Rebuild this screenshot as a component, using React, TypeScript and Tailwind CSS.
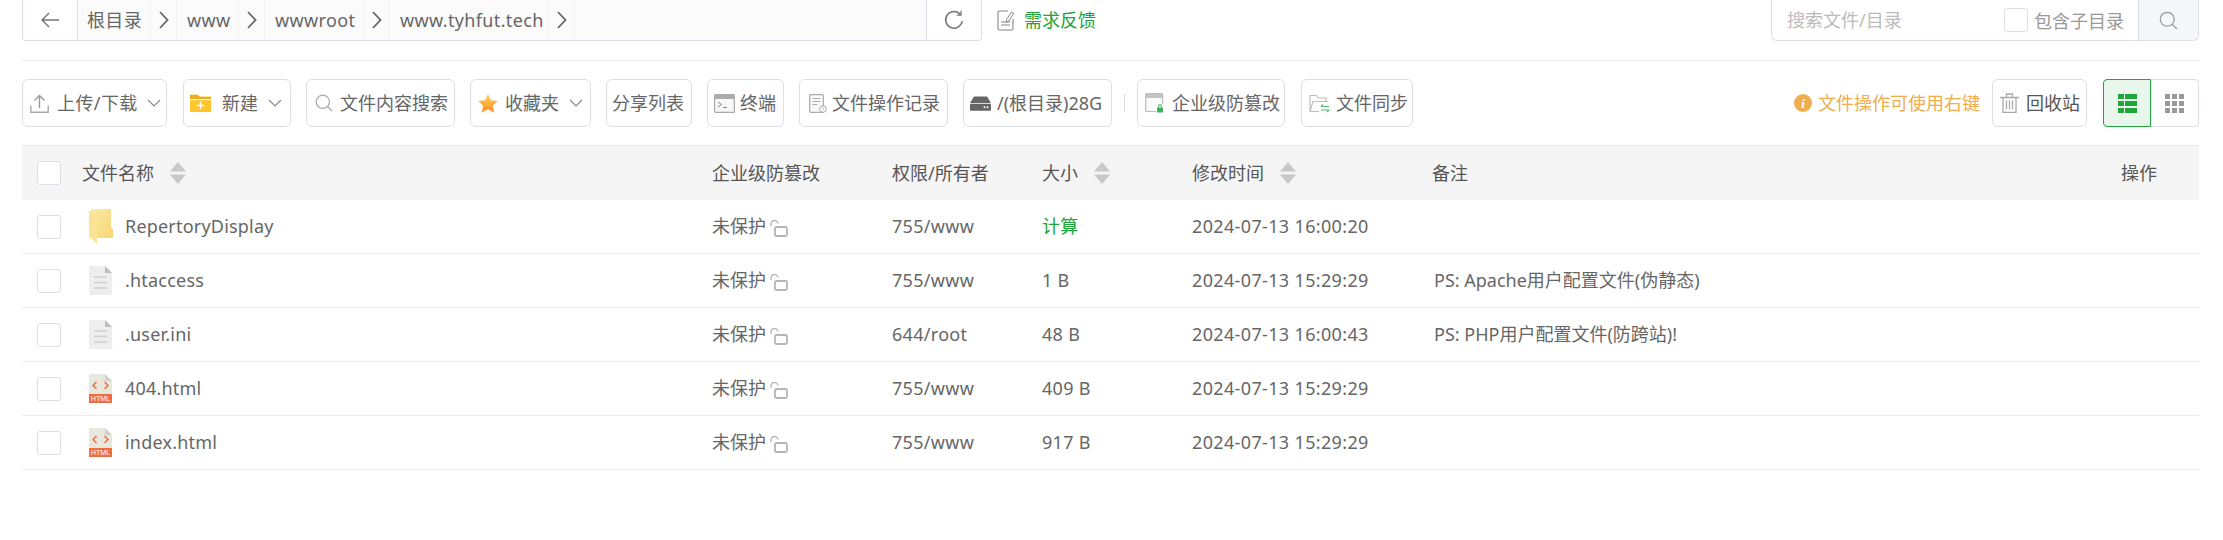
import React from "react";

const Chevron = ({ className = "" }: { className?: string }) => (
  <svg width="14" height="8" viewBox="0 0 14 8" fill="none" className={className}>
    <path d="M1 1l6 6 6-6" stroke="#8a8a8a" strokeWidth="1.2" />
  </svg>
);

const PathArrow = () => (
  <svg width="10" height="18" viewBox="0 0 10 18" fill="none">
    <path d="M1 1l7.5 8L1 17" stroke="#666" strokeWidth="1.8" />
  </svg>
);

const Upload = () => (
  <svg width="19" height="19" viewBox="0 0 19 19" fill="none" stroke="#999" strokeWidth="1.4">
    <path d="M9.5 14V1.5M4.5 6.5l5-5 5 5" />
    <path d="M.8 11.5v6.7h17.4v-6.7" stroke="#aaa" />
  </svg>
);

const NewFolder = () => (
  <svg width="21" height="18" viewBox="0 0 21 18">
    <path d="M0 1.5A1 1 0 0 1 1 .5h6l2 2h12V18H0z" fill="#fec52d" />
    <path d="M0 1h8l2 2h11v2H0z" fill="#f0a81e" />
    <rect x="0" y="5" width="21" height="1.2" fill="#fff" />
    <path d="M10.5 8v7M7 11.5h7" stroke="#fff" strokeWidth="1.3" />
  </svg>
);

const Search = ({ color = "#aaa", size = 18 }: { color?: string; size?: number }) => (
  <svg width={size} height={size} viewBox="0 0 18 18" fill="none" stroke={color} strokeWidth="1.2">
    <circle cx="7.8" cy="7.8" r="6.6" />
    <path d="M12.5 12.5l4.5 4.5" />
  </svg>
);

const Star = () => (
  <svg width="20" height="19" viewBox="0 0 20 19">
    <defs>
      <linearGradient id="starGrad" x1="0" y1="0" x2="0" y2="1">
        <stop offset="0" stopColor="#fdd667" />
        <stop offset="1" stopColor="#f98c1e" />
      </linearGradient>
    </defs>
    <path d="M10 0l3 6.2 6.8.9-5 4.7 1.300 6.800L10 15.300l-6.100 3.300 1.300-6.800-5-4.700 6.800-.9z" fill="url(#starGrad)" />
  </svg>
);

const Terminal = () => (
  <svg width="21" height="19" viewBox="0 0 21 19" fill="none">
    <rect x=".6" y=".6" width="19.800" height="17.800" rx="1" stroke="#aaa" strokeWidth="1.200" fill="#f7f7f7" />
    <rect x="1" y="1" width="19" height="4" fill="#aaa" />
    <path d="M4 8l3.500 2.500L4 13" stroke="#888" strokeWidth="1" />
    <path d="M9 13.500h4" stroke="#888" strokeWidth="1" />
  </svg>
);

const LogDoc = () => (
  <svg width="18" height="19" viewBox="0 0 18 19" fill="none">
    <rect x=".7" y=".7" width="13.600" height="17.600" rx="1" stroke="#aaa" strokeWidth="1.200" fill="#fafafa" />
    <path d="M3.500 4.500h8M3.500 7.500h8M3.500 10.500h5" stroke="#aaa" strokeWidth="1.100" />
    <circle cx="14" cy="15" r="3.300" fill="#fff" stroke="#aaa" />
    <path d="M14 13.300v1.800l1 .7" stroke="#aaa" strokeWidth=".8" />
  </svg>
);

const Disk = () => (
  <svg width="21" height="15" viewBox="0 0 21 15">
    <path d="M4 .5h13L21 7H0z" fill="#666" />
    <rect x="0" y="7.800" width="21" height="7" rx="1" fill="#666" />
    <circle cx="17.500" cy="11.300" r="1" fill="#fff" />
    <circle cx="14.500" cy="11.300" r="1" fill="#fff" />
  </svg>
);

const Guard = () => (
  <svg width="20" height="20" viewBox="0 0 20 20" fill="none">
    <rect x=".7" y=".7" width="17" height="17.800" rx="1" stroke="#bbb" strokeWidth="1.200" fill="#fafafa" />
    <rect x="1" y="1" width="16.500" height="4" fill="#c4c4c4" />
    <rect x="11" y="11" width="8" height="9" fill="#fff" />
    <rect x="12" y="14.500" width="6" height="5" rx=".8" fill="#3fb35a" />
    <path d="M13.500 14.500v-1.500a1.500 1.500 0 0 1 3 0v1.500" stroke="#3fb35a" strokeWidth="1" />
  </svg>
);

const SyncFolder = () => (
  <svg width="21" height="19" viewBox="0 0 21 19" fill="none">
    <path d="M1 17.500V1.500h6l2 2.500h8v3" stroke="#bbb" strokeWidth="1.100" />
    <path d="M1 17.500L4 7.500h15.500" stroke="#bbb" strokeWidth="1.100" />
    <path d="M1 17.500h9" stroke="#bbb" strokeWidth="1.100" />
    <path d="M12 12.500h8M14 10.500l-2 2" stroke="#5cb870" strokeWidth="1.100" />
    <path d="M20 16h-8M18 18l2-2" stroke="#5cb870" strokeWidth="1.100" />
  </svg>
);

const Trash = () => (
  <svg width="19" height="20" viewBox="0 0 19 20" fill="none" stroke="#aaa" strokeWidth="1.300">
    <path d="M0 4.500h19M6.500 4V1h6v3" />
    <path d="M3 4.500v15h13v-15" />
    <path d="M6.500 7.500v9M9.500 7.500v9M12.500 7.500v9" />
  </svg>
);

const Refresh = () => (
  <svg width="20" height="20" viewBox="0 0 20 20" fill="none" stroke="#777" strokeWidth="1.500">
    <path d="M16.500 4.700A8.300 8.300 0 1 0 18.200 11" />
    <path d="M17 .8v4.400h-4.300" strokeWidth="1.300" />
  </svg>
);

const FeedbackIcon = () => (
  <svg width="18" height="21" viewBox="0 0 18 21" fill="none">
    <path d="M11 1H2.500A1.500 1.500 0 0 0 1 2.500v16A1.500 1.500 0 0 0 2.500 20h12a1.500 1.500 0 0 0 1.500-1.500V9" stroke="#888" strokeWidth="1.100" />
    <path d="M9.500 9.500l5-7.500 2.200 1.500-5 7.500-2.400.8z" stroke="#888" strokeWidth="1" />
    <path d="M4 12h9M4 15h9" stroke="#888" strokeWidth="1.100" />
  </svg>
);

const SortIcon = () => (
  <svg width="16" height="22" viewBox="0 0 16 22">
    <path d="M8 0l8 9.500H0z" fill="#c8c8c8" />
    <path d="M8 22L0 12.500h16z" fill="#c8c8c8" />
  </svg>
);

const OpenLock = () => (
  <svg width="18" height="17" viewBox="0 0 18 17" fill="none" className="ml-[4px] mt-[3px]">
    <rect x="5" y="7" width="12" height="9" rx="1.500" stroke="#b5b5b5" strokeWidth="1.800" />
    <path d="M1 6V4.500a3.500 3.500 0 0 1 7-1" stroke="#b5b5b5" strokeWidth="1.300" />
  </svg>
);

const FolderIcon = () => (
  <svg width="24" height="35" viewBox="0 0 24 35">
    <defs>
      <linearGradient id="folderGrad" x1="0" y1="0" x2="1" y2="1">
        <stop offset="0" stopColor="#fdeaa5" />
        <stop offset="1" stopColor="#f6d676" />
      </linearGradient>
    </defs>
    <path d="M2 0h20v18l2 2.500V29H8V9L2 3z" fill="url(#folderGrad)" />
    <path d="M0 1l8 7v27l-8-7z" fill="#fbe394" />
  </svg>
);

const DocIcon = () => (
  <svg width="23" height="29" viewBox="0 0 23 29">
    <path d="M0 0h16l7 7v22H0z" fill="#eeeeee" />
    <path d="M16 0l7 7h-7z" fill="#bdbdbd" />
    <path d="M5 11h13M5 16.500h13M5 22h13" stroke="#cfcfcf" strokeWidth="1.300" />
  </svg>
);

const HtmlIcon = () => (
  <svg width="23" height="29" viewBox="0 0 23 29">
    <path d="M0 0h16l7 7v14H0z" fill="#e9e8df" />
    <path d="M16 0l7 7h-7z" fill="#d2d1c8" />
    <path d="M7.500 8l-3.500 3.500L7.500 15M15.500 8l3.500 3.500L15.500 15" fill="none" stroke="#ea7045" strokeWidth="1.500" />
    <rect x="0" y="20" width="23" height="9" fill="#ee6e3d" />
    <text x="11.500" y="27.300" textAnchor="middle" fontSize="7.200" fill="#fff" fontFamily="'Liberation Sans', sans-serif">HTML</text>
  </svg>
);

const Btn = ({ w, pl, gap = "gap-[8px]", children }: { w: string; pl: string; gap?: string; children: React.ReactNode }) => (
  <div className={`${w} ${pl} ${gap} h-[48px] shrink-0 flex items-center border border-[#dcdfe6] rounded-[6px] text-[18px] text-[#666]`}>
    {children}
  </div>
);

const pathItems: [string, string][] = [
  ["根目录", "w-[73px] pl-[9px]"],
  ["www", "w-[62px] pl-[10px]"],
  ["wwwroot", "w-[99px] pl-[10px]"],
  ["www.tyhfut.tech", "w-[159px] pl-[10px]"],
];

const rows = [
  { name: "RepertoryDisplay", icon: <FolderIcon />, perm: "755/www", size: "计算", time: "2024-07-13 16:00:20", note: "" },
  { name: ".htaccess", icon: <DocIcon />, perm: "755/www", size: "1 B", time: "2024-07-13 15:29:29", note: "PS: Apache用户配置文件(伪静态)" },
  { name: ".user.ini", icon: <DocIcon />, perm: "644/root", size: "48 B", time: "2024-07-13 16:00:43", note: "PS: PHP用户配置文件(防跨站)!" },
  { name: "404.html", icon: <HtmlIcon />, perm: "755/www", size: "409 B", time: "2024-07-13 15:29:29", note: "" },
  { name: "index.html", icon: <HtmlIcon />, perm: "755/www", size: "917 B", time: "2024-07-13 15:29:29", note: "" },
];

const gridCols = "grid grid-cols-[60px_630px_180px_150px_150px_240px_689px_1fr] items-center";

const Check = () => <div className="ml-[15px] w-[24px] h-[24px] bg-white border border-[#dcdfe6] rounded-[3px]" />;

export default function App() {
  return (
    <div className="w-[2223px] h-[540px] bg-white pl-[22px] pr-[24px] overflow-hidden font-['Noto_Sans','Noto_Sans_CJK_SC',sans-serif] text-[18px] text-[#666]">
      {/* top bar */}
      <div className="flex h-[41px]">
        <div className="w-[56px] flex items-center justify-center border-x border-b border-[#dcdfe6] rounded-bl-[4px]">
          <svg width="18" height="16" viewBox="0 0 18 16" fill="none" stroke="#777" strokeWidth="1.500">
            <path d="M18 8H1M8 1L1 8l7 7" />
          </svg>
        </div>
        <div className="w-[848px] flex items-center bg-[#fbfbfb] border-b border-[#dcdfe6]">
          {pathItems.map(([t, c]) => (
            <React.Fragment key={t}>
              <div className={`${c} h-full flex items-center border-r border-[#f4f4f4] text-[#666] tracking-[0.35px]`}>{t}</div>
              <div className="w-[26px] h-full flex items-center pl-[8px] border-r border-[#f4f4f4]">
                <PathArrow />
              </div>
            </React.Fragment>
          ))}
        </div>
        <div className="w-[56px] flex items-center justify-center border-x border-b border-[#dcdfe6] rounded-br-[4px]">
          <Refresh />
        </div>
        <div className="ml-[15px] flex items-center gap-[9px]">
          <FeedbackIcon />
          <span className="text-[#20a53a]">需求反馈</span>
        </div>
        <div className="ml-auto w-[428px] flex items-center border-x border-b border-[#dcdfe6] rounded-b-[6px]">
          <span className="pl-[15px] w-[232px] text-[#bbb]">搜索文件/目录</span>
          <div className="w-[24px] h-[24px] border border-[#dcdfe6] rounded-[3px]" />
          <span className="ml-[6px] w-[104px] text-[#999] mt-[2px]">包含子目录</span>
          <div className="flex-1 h-full flex items-center justify-center bg-[#f4f6fa] border-l border-[#dcdfe6] rounded-br-[6px]">
            <Search color="#999" size={19} />
          </div>
        </div>
      </div>

      <div className="mt-[19px] border-t border-[#ececec]" />

      {/* toolbar */}
      <div className="mt-[18px] flex items-center h-[48px] gap-[15px]">
        <Btn w="w-[145px]" pl="pl-[7px]" gap="gap-[8px]">
          <Upload />
          <span className="tracking-[0.4px]">上传/下载</span>
          <Chevron className="ml-[1px]" />
        </Btn>
        <Btn w="w-[108px] ml-[1px]" pl="pl-[6px]" gap="gap-[11px]">
          <NewFolder />
          <span>新建</span>
          <Chevron className="-ml-[1px]" />
        </Btn>
        <Btn w="w-[149px]" pl="pl-[8px]" gap="gap-[7px]">
          <Search />
          <span>文件内容搜索</span>
        </Btn>
        <Btn w="w-[121px]" pl="pl-[7px]" gap="gap-[7px]">
          <Star />
          <span>收藏夹</span>
          <Chevron className="ml-[3px]" />
        </Btn>
        <Btn w="w-[86px]" pl="pl-[5px]">
          <span>分享列表</span>
        </Btn>
        <Btn w="w-[77px]" pl="pl-[6px]" gap="gap-[5px]">
          <Terminal />
          <span>终端</span>
        </Btn>
        <Btn w="w-[149px]" pl="pl-[9px]" gap="gap-[5px]">
          <LogDoc />
          <span>文件操作记录</span>
        </Btn>
        <Btn w="w-[149px]" pl="pl-[6px]" gap="gap-[6px]">
          <Disk />
          <span>/(根目录)28G</span>
        </Btn>
        <div className="w-[1px] h-[18px] bg-[#dcdcdc] mx-[-3px] shrink-0" />
        <Btn w="w-[148px]" pl="pl-[7px]" gap="gap-[7px]">
          <Guard />
          <span>企业级防篡改</span>
        </Btn>
        <Btn w="w-[112px] ml-[1px]" pl="pl-[7px]" gap="gap-[6px]">
          <SyncFolder />
          <span>文件同步</span>
        </Btn>

        <div className="ml-auto flex items-center gap-[6px] text-[#f0ad4e]">
          <svg width="18" height="18" viewBox="0 0 18 18">
            <circle cx="9" cy="9" r="9" fill="#f0ad4e" />
            <text x="9" y="14" textAnchor="middle" fontSize="13" fontWeight="700" fontStyle="italic" fill="#fff" fontFamily="'Liberation Serif', serif">i</text>
          </svg>
          <span>文件操作可使用右键</span>
        </div>
        <div className="-ml-[3px] mr-[1px]">
          <Btn w="w-[95px]" pl="pl-[7px]" gap="gap-[7px]">
            <Trash />
            <span className="text-[#555]">回收站</span>
          </Btn>
        </div>
        <div className="flex">
          <div className="w-[48px] h-[48px] flex items-center justify-center bg-[#e9f6ec] border border-[#20a53a] rounded-l-[4px]">
            <svg width="19" height="19" viewBox="0 0 19 19" fill="#20a53a">
              <rect x="0" y="0" width="6" height="5" />
              <rect x="7" y="0" width="12" height="5" />
              <rect x="0" y="7" width="6" height="5" />
              <rect x="7" y="7" width="12" height="5" />
              <rect x="0" y="14" width="6" height="5" />
              <rect x="7" y="14" width="12" height="5" />
            </svg>
          </div>
          <div className="w-[48px] h-[48px] flex items-center justify-center border border-l-0 border-[#dcdfe6] rounded-r-[4px]">
            <svg width="19" height="19" viewBox="0 0 19 19" fill="#999">
              {[0, 7, 14].flatMap((y) =>
                [0, 7, 14].map((x) => <rect key={`${x}-${y}`} x={x} y={y} width="5" height="5" />)
              )}
            </svg>
          </div>
        </div>
      </div>

      {/* table */}
      <div className={`${gridCols} mt-[18px] h-[55px] bg-[#f5f5f5] border-t border-[#ececec] text-[#555]`}>
        <Check />
        <div className="flex items-center gap-[16px]">
          <span>文件名称</span>
          <SortIcon />
        </div>
        <span>企业级防篡改</span>
        <span>权限/所有者</span>
        <div className="flex items-center gap-[16px]">
          <span>大小</span>
          <SortIcon />
        </div>
        <div className="flex items-center gap-[16px]">
          <span>修改时间</span>
          <SortIcon />
        </div>
        <span>备注</span>
        <span>操作</span>
      </div>
      {rows.map((r) => (
        <div key={r.name} className={`${gridCols} h-[54px] border-b border-[#ececec]`}>
          <Check />
          <div className="flex items-center">
            <div className="w-[43px] pl-[7px] flex items-center">{r.icon}</div>
            <span className="tracking-[0.2px]">{r.name}</span>
          </div>
          <div className="flex items-center">
            <span>未保护</span>
            <OpenLock />
          </div>
          <span className="tracking-[0.3px]">{r.perm}</span>
          <span className={`tracking-[0.3px] ${r.size === "计算" ? "text-[#20a53a]" : ""}`}>{r.size}</span>
          <span className="tracking-[0.35px]">{r.time}</span>
          <span className="pl-[2px]">{r.note}</span>
          <span />
        </div>
      ))}
    </div>
  );
}
